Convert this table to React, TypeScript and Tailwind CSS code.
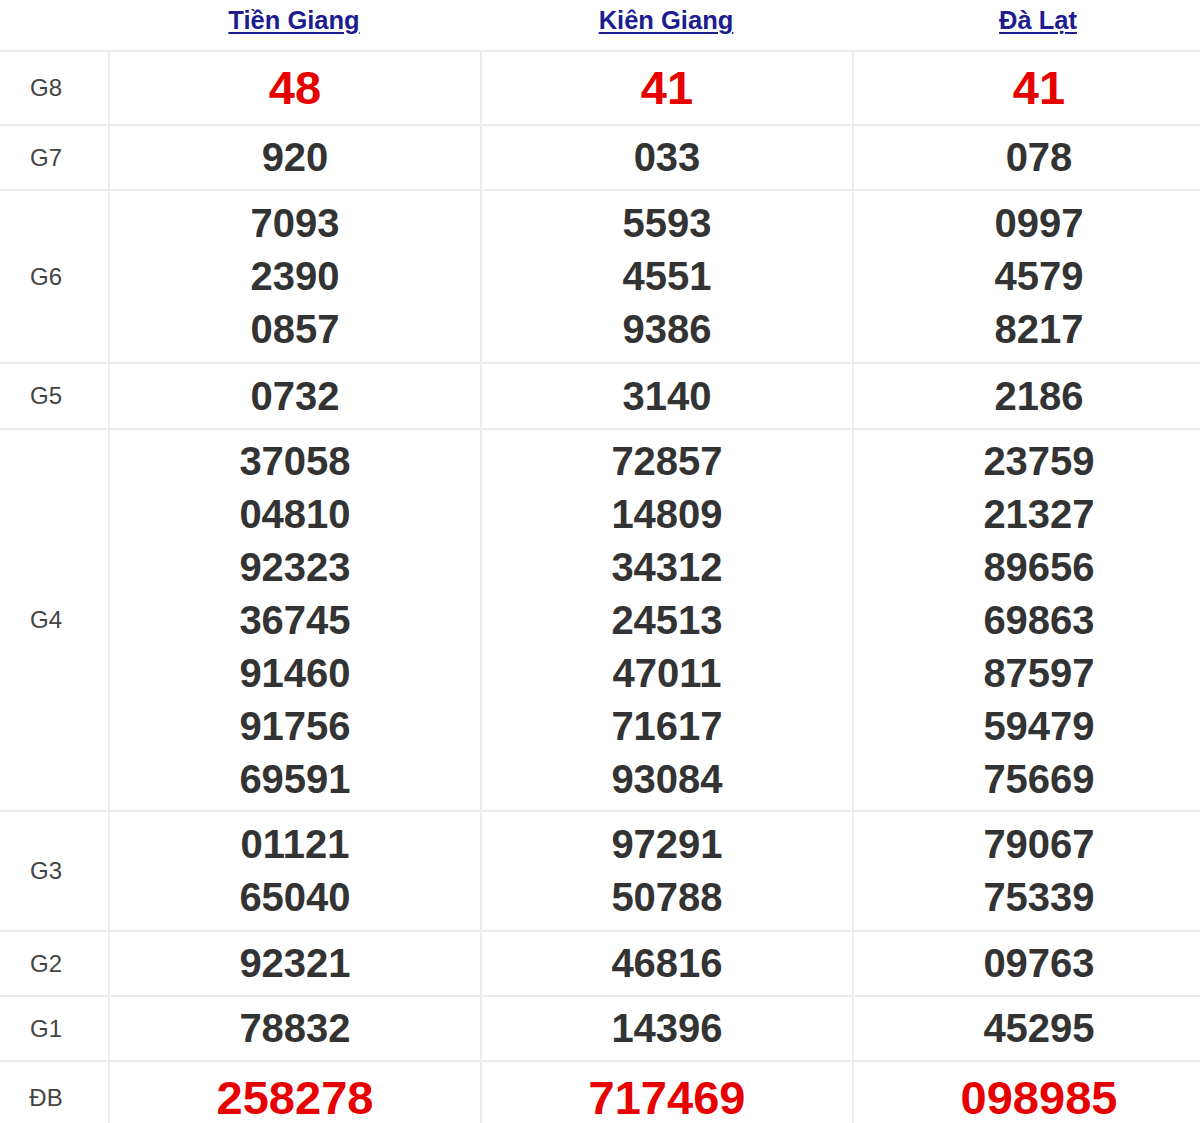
const provinces = ["Tiền Giang", "Kiên Giang", "Đà Lạt"];

type Row = {
  label: string;
  height: string;
  red?: boolean;
  values: string[][];
};

const rows: Row[] = [
  { label: "G8", height: "h-[72px]", red: true, values: [["48"], ["41"], ["41"]] },
  { label: "G7", height: "h-[63px]", values: [["920"], ["033"], ["078"]] },
  {
    label: "G6",
    height: "h-[171px]",
    values: [
      ["7093", "2390", "0857"],
      ["5593", "4551", "9386"],
      ["0997", "4579", "8217"],
    ],
  },
  { label: "G5", height: "h-[64px]", values: [["0732"], ["3140"], ["2186"]] },
  {
    label: "G4",
    height: "h-[380px]",
    values: [
      ["37058", "04810", "92323", "36745", "91460", "91756", "69591"],
      ["72857", "14809", "34312", "24513", "47011", "71617", "93084"],
      ["23759", "21327", "89656", "69863", "87597", "59479", "75669"],
    ],
  },
  {
    label: "G3",
    height: "h-[118px]",
    values: [
      ["01121", "65040"],
      ["97291", "50788"],
      ["79067", "75339"],
    ],
  },
  { label: "G2", height: "h-[63px]", values: [["92321"], ["46816"], ["09763"]] },
  { label: "G1", height: "h-[63px]", values: [["78832"], ["14396"], ["45295"]] },
  { label: "ĐB", height: "h-[72px]", red: true, values: [["258278"], ["717469"], ["098985"]] },
];

export default function App() {
  return (
    <div className="w-full h-screen overflow-hidden bg-white font-['Liberation_Sans',Arial,sans-serif]">
      <div className="w-[1224px]">
        {/* province header */}
        <div className="grid grid-cols-[108px_372px_372px_372px] h-[52px] border-b-2 border-[#ebebeb]">
          <div />
          {provinces.map((p) => (
            <div key={p} className="flex justify-center pt-[6px]">
              <a className="text-[25.5px] leading-[29px] font-bold text-[#1d1d8f] underline underline-offset-[3px] decoration-[2px]">
                {p}
              </a>
            </div>
          ))}
        </div>

        {rows.map((row) => (
          <div
            key={row.label}
            className="grid grid-cols-[108px_372px_372px_372px] border-b-2 border-[#ebebeb]"
          >
            <div className={`${row.height} flex items-center justify-center text-[24px] text-[#444] pr-[16px]`}>
              {row.label}
            </div>
            {row.values.map((col, i) => (
              <div
                key={i}
                className={`${row.height} flex flex-col items-center justify-center border-l-2 border-[#ebebeb]`}
              >
                {col.map((n) => (
                  <span
                    key={n}
                    className={
                      row.red
                        ? "text-[47px] leading-[60px] font-bold text-[#e60000]"
                        : "text-[40px] leading-[53px] font-bold text-[#333]"
                    }
                  >
                    {n}
                  </span>
                ))}
              </div>
            ))}
          </div>
        ))}
      </div>
    </div>
  );
}
